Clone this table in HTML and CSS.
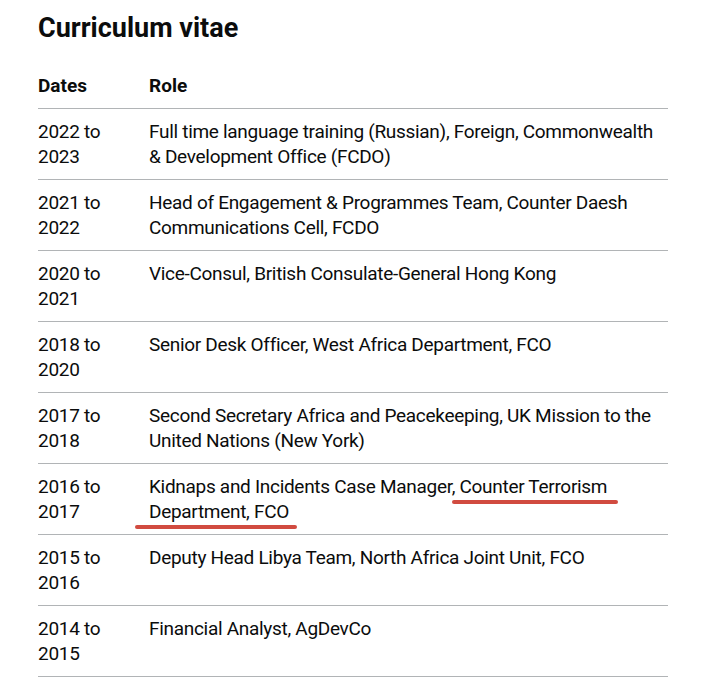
FILE: index.html
```html
<!DOCTYPE html>
<html lang="en">
<head>
<meta charset="utf-8">
<title>Curriculum vitae</title>
<link rel="stylesheet" href="styles.css">
</head>
<body>
<main class="page">
  <h2 class="heading">Curriculum vitae</h2>
  <table class="cv">
    <thead>
      <tr><th class="col-dates">Dates</th><th>Role</th></tr>
    </thead>
    <tbody>
      <tr><td>2022 to 2023</td><td>Full time language training (Russian), Foreign, Commonwealth &amp; Development Office (FCDO)</td></tr>
      <tr><td>2021 to 2022</td><td>Head of Engagement &amp; Programmes Team, Counter Daesh Communications Cell, FCDO</td></tr>
      <tr><td>2020 to 2021</td><td>Vice-Consul, British Consulate-General Hong Kong</td></tr>
      <tr><td>2018 to 2020</td><td>Senior Desk Officer, West Africa Department, FCO</td></tr>
      <tr><td>2017 to 2018</td><td>Second Secretary Africa and Peacekeeping, UK Mission to the United Nations (New York)</td></tr>
      <tr><td>2016 to 2017</td><td>Kidnaps and Incidents Case Manager, <span class="mark mark-a">Counter Terrorism</span> <span class="mark mark-b">Department, FCO</span></td></tr>
      <tr><td>2015 to 2016</td><td>Deputy Head Libya Team, North Africa Joint Unit, FCO</td></tr>
      <tr><td>2014 to 2015</td><td>Financial Analyst, AgDevCo</td></tr>
    </tbody>
  </table>
</main>
</body>
</html>
```
FILE: styles.css
```css
html, body {
  margin: 0;
  padding: 0;
  background: #ffffff;
}
body {
  font-family: Roboto, "Liberation Sans", Arial, sans-serif;
  color: #0b0c0c;
}
.page {
  padding: 13px 0 0 38px;
  width: 630px;
}
.heading {
  margin: 0 0 20px;
  font-size: 27px;
  line-height: 30px;
  font-weight: 700;
}
.cv {
  width: 630px;
  border-collapse: collapse;
  border-spacing: 0;
  font-size: 19px;
  line-height: 25px;
}
.cv th, .cv td {
  text-align: left;
  vertical-align: top;
  padding: 10px 20px 10px 0;
  border-bottom: 1px solid #b1b4b6;
}
.cv th {
  font-weight: 700;
}
.cv td {
  letter-spacing: -0.3px;
}
.cv td:last-child, .cv th:last-child {
  padding-right: 0;
}
.col-dates {
  width: 91px;
}
.mark {
  position: relative;
}
.mark::after {
  content: "";
  position: absolute;
  height: 4px;
  border-radius: 2px;
  background: #d14b40;
  bottom: -6px;
}
.mark-a::after {
  left: -8px;
  right: -11px;
}
.mark-b::after {
  left: -14px;
  right: -8px;
}
```
